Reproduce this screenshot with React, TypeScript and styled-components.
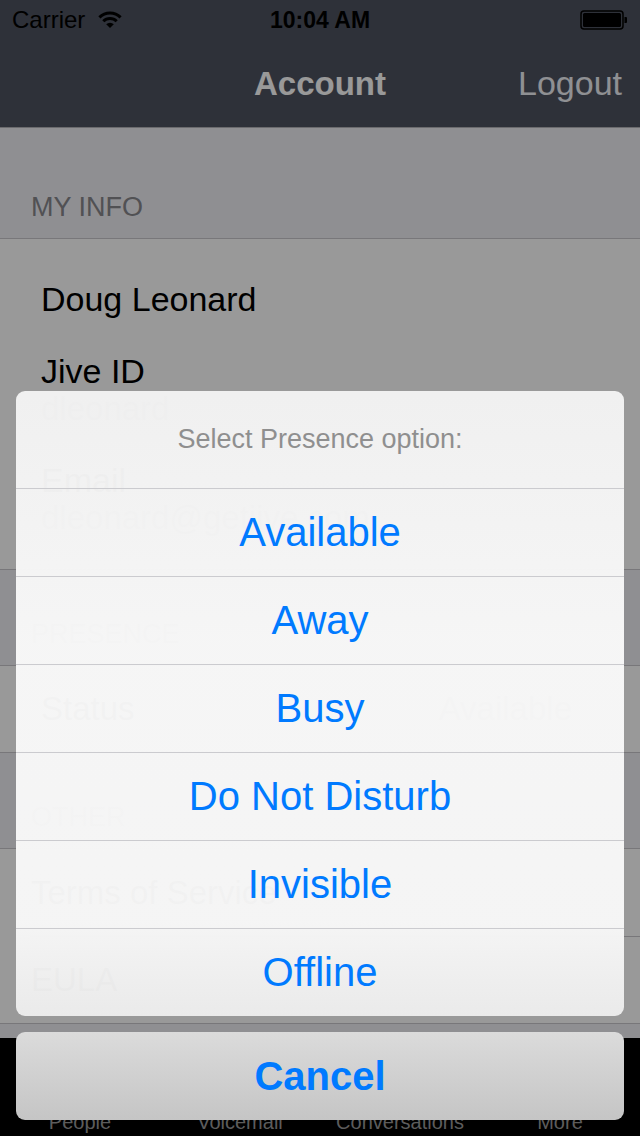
import React from "react";
import styled, { createGlobalStyle } from "styled-components";
import { Users, Voicemail, MessageSquare, MoreHorizontal } from "lucide-react";

const GlobalStyle = createGlobalStyle`
  html, body { margin: 0; padding: 0; }
  body {
    width: 640px;
    height: 1136px;
    overflow: hidden;
    font-family: "Liberation Sans", Arial, Helvetica, sans-serif;
    background: #efeff4;
  }
  * { box-sizing: border-box; }
`;

const Screen = styled.div`
  position: relative;
  width: 640px;
  height: 1136px;
  display: flex;
  flex-direction: column;
  background: #efeff4;
`;

const Header = styled.header`
  background: #4d525f;
  border-bottom: 1px solid #b3b3b7;
  display: flex;
  flex-direction: column;
`;

const StatusBar = styled.div`
  height: 40px;
  display: grid;
  grid-template-columns: 1fr auto 1fr;
  align-items: center;
  padding: 0 12px;
  color: #000;
`;

const Carrier = styled.div`
  display: flex;
  align-items: center;
  gap: 12px;
  font-size: 24px;
`;

const Clock = styled.div`
  font-size: 23px;
  font-weight: 700;
`;

const BatteryWrap = styled.div`
  justify-self: end;
  display: flex;
  align-items: center;
`;

const NavBar = styled.div`
  height: 87px;
  display: grid;
  grid-template-columns: 1fr auto 1fr;
  align-items: center;
  padding: 0 18px;
`;

const NavTitle = styled.h1`
  margin: 0;
  font-size: 33px;
  font-weight: 700;
  color: #ffffff;
`;

const NavAction = styled.button`
  justify-self: end;
  background: none;
  border: 0;
  padding: 0;
  font-family: inherit;
  font-size: 34px;
  color: #eef1f6;
`;

const Content = styled.main`
  flex: 1;
  display: flex;
  flex-direction: column;
`;

const SectionHeader = styled.div<{ $h: number }>`
  height: ${(p) => p.$h}px;
  display: flex;
  align-items: flex-end;
  padding: 0 31px 17px;
  font-size: 27px;
  line-height: 27px;
  color: #87878c;
  text-transform: uppercase;
`;

const Group = styled.div`
  background: #ffffff;
  border-top: 1px solid #c8c7cc;
  border-bottom: 1px solid #c8c7cc;
`;

const InfoGroup = styled(Group)`
  display: flex;
  flex-direction: column;
  gap: 33px;
  padding: 40px 41px 32px;
`;

const Name = styled.div`
  font-size: 34px;
  line-height: 40px;
  color: #000;
`;

const Field = styled.div`
  display: flex;
  flex-direction: column;
`;

const FieldLabel = styled.div`
  font-size: 34px;
  line-height: 38px;
  color: #000;
`;

const FieldValue = styled.div`
  font-size: 33px;
  line-height: 38px;
  color: #8e8e93;
`;

const Row = styled.div<{ $h: number; $indent: number }>`
  height: ${(p) => p.$h}px;
  display: flex;
  align-items: center;
  padding: 0 68px 0 ${(p) => p.$indent}px;
  font-size: 33px;
  color: #000;

  & + & {
    border-top: 1px solid #c8c7cc;
    margin-left: 30px;
    padding-left: ${(p) => p.$indent - 30}px;
  }
`;

const RowValue = styled.span`
  margin-left: auto;
  color: #8e8e93;
`;

const TabBar = styled.nav`
  height: 98px;
  background: #000;
  display: grid;
  grid-template-columns: repeat(4, 1fr);
`;

const Tab = styled.div`
  display: flex;
  flex-direction: column;
  align-items: center;
  justify-content: flex-end;
  gap: 6px;
  padding-bottom: 2px;
  color: #999;
  font-size: 20px;
  line-height: 24px;
`;

const Dim = styled.div`
  position: absolute;
  inset: 0;
  background: rgba(0, 0, 0, 0.4);
  display: flex;
  flex-direction: column;
  justify-content: flex-end;
  gap: 16px;
  padding: 0 16px 16px;
`;

const Sheet = styled.div`
  border-radius: 9px;
  overflow: hidden;
  display: flex;
  flex-direction: column;
  background: linear-gradient(
    rgba(242, 242, 242, 0.975) 0%,
    rgba(248, 248, 248, 0.975) 40%,
    rgba(247, 247, 247, 0.975) 85%,
    rgba(236, 236, 236, 0.975) 100%
  );
`;

const SheetTitle = styled.div`
  height: 97px;
  display: flex;
  align-items: center;
  justify-content: center;
  font-size: 27px;
  color: #8f8f8f;
`;

const SheetButton = styled.button<{ $bold?: boolean }>`
  height: 88px;
  padding: 0;
  border: 0;
  border-top: 1px solid #cbcbcf;
  background: transparent;
  font-family: inherit;
  font-size: 40px;
  font-weight: ${(p) => (p.$bold ? 700 : 400)};
  color: #007aff;
`;

const CancelButton = styled(SheetButton)`
  border-top: 0;
  border-radius: 9px;
  background: linear-gradient(#dbdbdb, #c5c5c5);
`;

const WifiIcon = () => (
  <svg width="26" height="18" viewBox="0 0 26 18">
    <path d="M13 17 L9.2 13.2 A5.4 5.4 0 0 1 16.8 13.2 Z" fill="#000" />
    <path d="M6.3 10.3 A9.5 9.5 0 0 1 19.7 10.3" stroke="#000" strokeWidth="3" fill="none" />
    <path d="M2.4 6.4 A15 15 0 0 1 23.6 6.4" stroke="#000" strokeWidth="3" fill="none" />
  </svg>
);

const BatteryIcon = () => (
  <svg width="48" height="20" viewBox="0 0 48 20">
    <rect x="1" y="1" width="42" height="18" rx="3" fill="none" stroke="#000" strokeWidth="1.5" />
    <rect x="3" y="3" width="38" height="14" rx="1.5" fill="#000" />
    <path d="M44.5 7 h1.5 a1 1 0 0 1 1 1 v4 a1 1 0 0 1 -1 1 h-1.5 Z" fill="#000" />
  </svg>
);

const options = ["Available", "Away", "Busy", "Do Not Disturb", "Invisible", "Offline"];

const tabs = [
  { label: "People", Icon: Users },
  { label: "Voicemail", Icon: Voicemail },
  { label: "Conversations", Icon: MessageSquare },
  { label: "More", Icon: MoreHorizontal },
];

export default function App() {
  return (
    <>
      <GlobalStyle />
      <Screen>
        <Header>
          <StatusBar>
            <Carrier>
              Carrier
              <WifiIcon />
            </Carrier>
            <Clock>10:04 AM</Clock>
            <BatteryWrap>
              <BatteryIcon />
            </BatteryWrap>
          </StatusBar>
          <NavBar>
            <span />
            <NavTitle>Account</NavTitle>
            <NavAction>Logout</NavAction>
          </NavBar>
        </Header>

        <Content>
          <SectionHeader $h={110}>My Info</SectionHeader>
          <InfoGroup>
            <Name>Doug Leonard</Name>
            <Field>
              <FieldLabel>Jive ID</FieldLabel>
              <FieldValue>dleonard</FieldValue>
            </Field>
            <Field>
              <FieldLabel>Email</FieldLabel>
              <FieldValue>dleonard@getjive.com</FieldValue>
            </Field>
          </InfoGroup>

          <SectionHeader $h={95}>Presence</SectionHeader>
          <Group>
            <Row $h={86} $indent={41}>
              Status
              <RowValue>Available</RowValue>
            </Row>
          </Group>

          <SectionHeader $h={95}>Other</SectionHeader>
          <Group>
            <Row $h={87} $indent={31}>Terms of Service</Row>
            <Row $h={87} $indent={31}>EULA</Row>
          </Group>
        </Content>

        <TabBar>
          {tabs.map(({ label, Icon }) => (
            <Tab key={label}>
              <Icon size={44} strokeWidth={1.5} />
              {label}
            </Tab>
          ))}
        </TabBar>

        <Dim>
          <Sheet>
            <SheetTitle>Select Presence option:</SheetTitle>
            {options.map((o) => (
              <SheetButton key={o}>{o}</SheetButton>
            ))}
          </Sheet>
          <CancelButton $bold>Cancel</CancelButton>
        </Dim>
      </Screen>
    </>
  );
}
